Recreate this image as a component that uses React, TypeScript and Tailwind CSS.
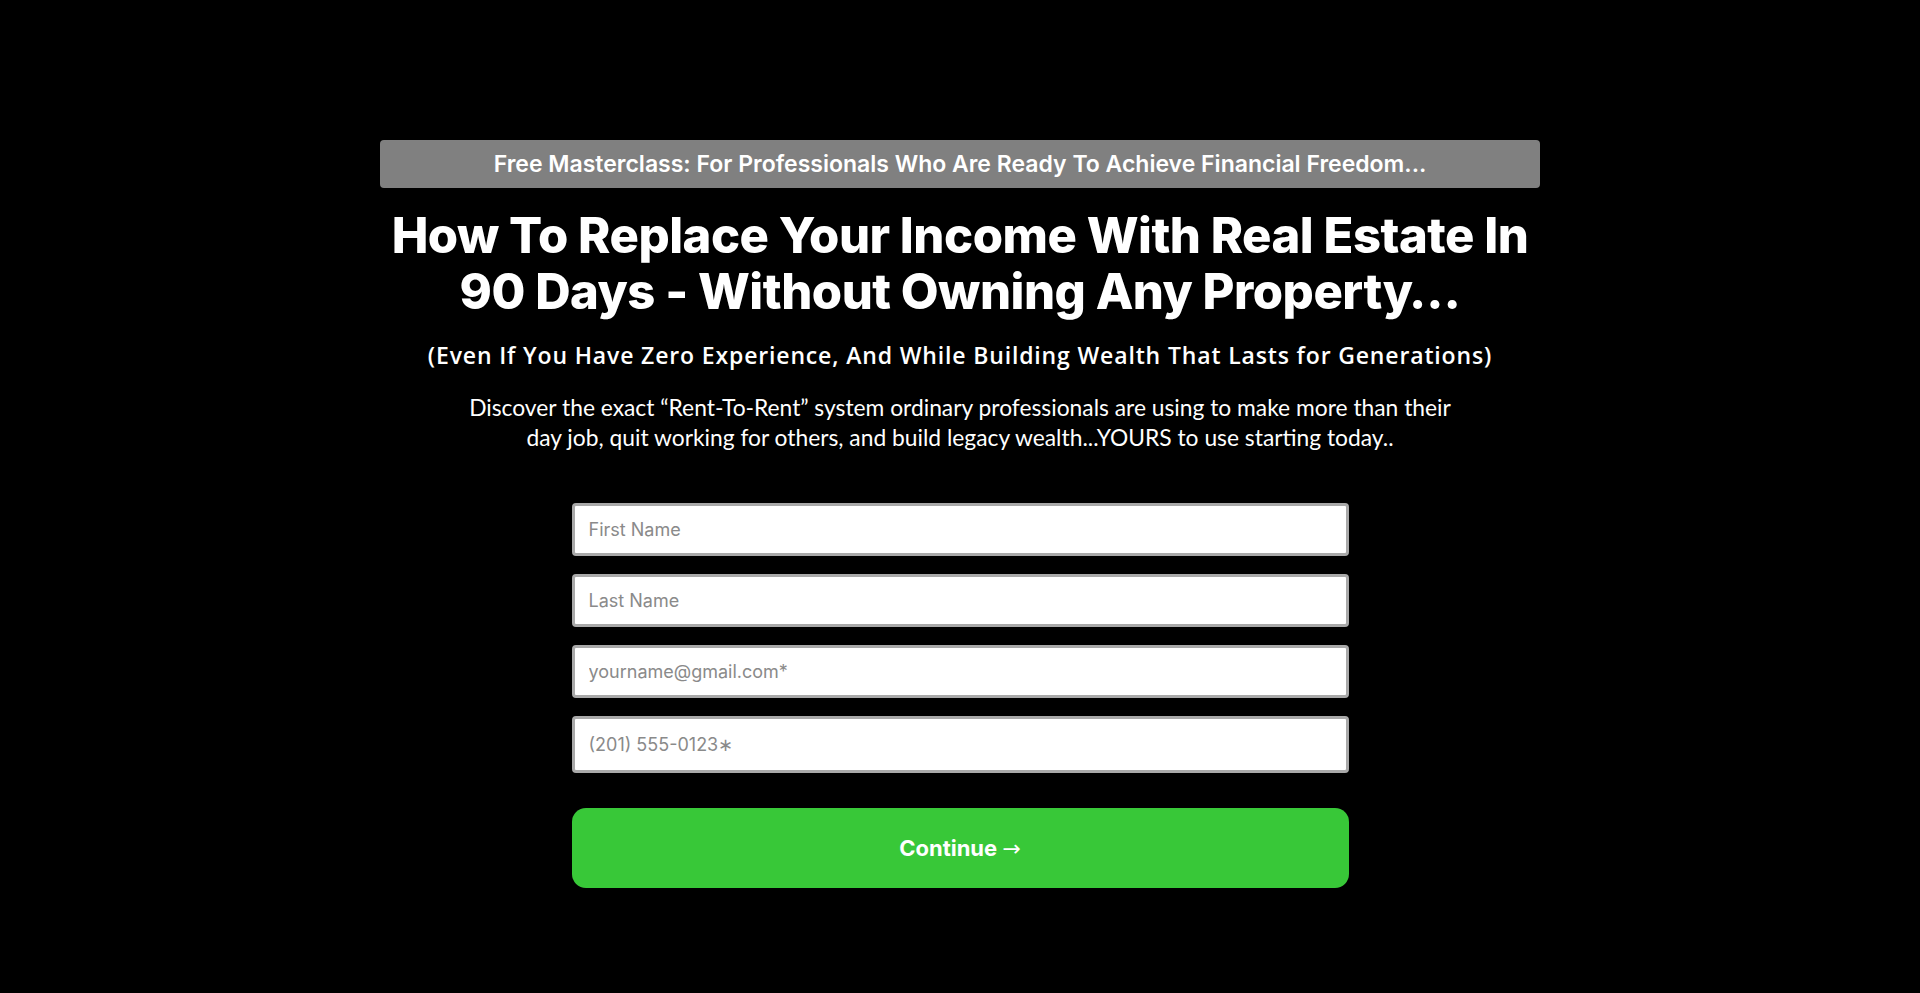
// Masterclass opt-in page: banner, headline, sub copy and the lead form.

const fields = [
    { name: 'firstName', placeholder: 'First Name', type: 'text', tall: false },
    { name: 'lastName', placeholder: 'Last Name', type: 'text', tall: false },
    { name: 'email', placeholder: 'yourname@gmail.com*', type: 'email', tall: false },
    { name: 'phone', placeholder: '(201) 555-0123∗', type: 'tel', tall: true },
];

export default function App() {
    return (
        <div className="min-h-screen w-full bg-black font-['Inter','Liberation_Sans',sans-serif] text-white">
            <div className="mx-auto flex w-[1160px] flex-col items-center pt-[140px]">
                <div className="flex h-[48px] w-full items-center justify-center rounded-[4px] bg-[#808080] text-[23px] font-semibold">
                    Free Masterclass: For Professionals Who Are Ready To Achieve Financial Freedom...
                </div>

                <h1 className="mt-[20px] text-center text-[49px] leading-[56px] font-extrabold tracking-[-0.01em]">
                    How To Replace Your Income With Real Estate In
                    <br />
                    90 Days - Without Owning Any Property…
                </h1>

                <p className="mt-[21px] text-center font-['Open_Sans',sans-serif] text-[23px] leading-[28px] font-semibold tracking-[0.037em]">
                    (Even If You Have Zero Experience, And While Building Wealth That Lasts for Generations)
                </p>

                <p className="mt-[23px] w-[1040px] text-center font-['Lato',sans-serif] text-[22.8px] leading-[30px]">
                    Discover the exact “Rent-To-Rent” system ordinary professionals are using to make more than their
                    <br />
                    day job, quit working for others, and build legacy wealth...YOURS to use starting today..
                </p>

                <form className="mt-[51px] flex w-[777px] flex-col" onSubmit={(e) => e.preventDefault()}>
                    <div className="flex flex-col gap-[18px]">
                        {fields.map((f) => (
                            <input
                                key={f.name}
                                name={f.name}
                                type={f.type}
                                placeholder={f.placeholder}
                                className={`${f.tall ? 'h-[57px]' : 'h-[53px]'} w-full rounded-[4px] border-[3px] border-[#a9a9a9] bg-white px-[14px] text-[18px] text-black outline-none placeholder:text-[#8a8a8a]`}
                            />
                        ))}
                    </div>
                    <button
                        type="submit"
                        className="mt-[35px] h-[80px] w-full rounded-[14px] bg-[#38c838] text-[22px] font-bold text-white"
                    >
                        Continue <span className="font-['DejaVu_Sans',sans-serif] font-normal">→</span>
                    </button>
                </form>
            </div>
        </div>
    );
}
